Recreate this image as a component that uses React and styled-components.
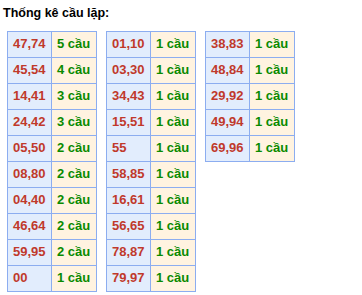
import React from "react"
import styled, { createGlobalStyle } from "styled-components"

const GlobalStyle = createGlobalStyle`
  body {
    margin: 0;
    background: #ffffff;
    font-family: "Liberation Sans", Arial, sans-serif;
  }
`

const Wrapper = styled.div`
  padding: 6px 0 0 3px;
`

const Title = styled.div`
  font-size: 12.5px;
  font-weight: 700;
  color: #000;
  line-height: 15px;
  margin-bottom: 10px;
`

const Tables = styled.div`
  display: flex;
  align-items: flex-start;
  gap: 9px;
  padding-left: 4px;
`

const Table = styled.table`
  border-collapse: collapse;
  border: 1px solid #8cadf0;
`

const Cell = styled.td`
  border: 1px solid #8cadf0;
  height: 26px;
  padding: 0 0 2px 5px;
  box-sizing: border-box;
  font-size: 13px;
  font-weight: 700;
  white-space: nowrap;
  width: ${props => (props.count ? "45px" : "44px")};
  background: ${props => (props.count ? "#fff3e0" : "#e2edfd")};
  color: ${props => (props.count ? "#0a8a00" : "#c0392b")};
`

const columns = [
  [
    ["47,74", 5], ["45,54", 4], ["14,41", 3], ["24,42", 3], ["05,50", 2],
    ["08,80", 2], ["04,40", 2], ["46,64", 2], ["59,95", 2], ["00", 1],
  ],
  [
    ["01,10", 1], ["03,30", 1], ["34,43", 1], ["15,51", 1], ["55", 1],
    ["58,85", 1], ["16,61", 1], ["56,65", 1], ["78,87", 1], ["79,97", 1],
  ],
  [
    ["38,83", 1], ["48,84", 1], ["29,92", 1], ["49,94", 1], ["69,96", 1],
  ],
]

function App() {
  return (
    <Wrapper>
      <GlobalStyle />
      <Title>Thống kê cầu lặp:</Title>
      <Tables>
        {columns.map((rows, i) => (
          <Table key={i}>
            <tbody>
              {rows.map(([pair, n]) => (
                <tr key={pair}>
                  <Cell>{pair}</Cell>
                  <Cell count>{n} cầu</Cell>
                </tr>
              ))}
            </tbody>
          </Table>
        ))}
      </Tables>
    </Wrapper>
  )
}

export default App
